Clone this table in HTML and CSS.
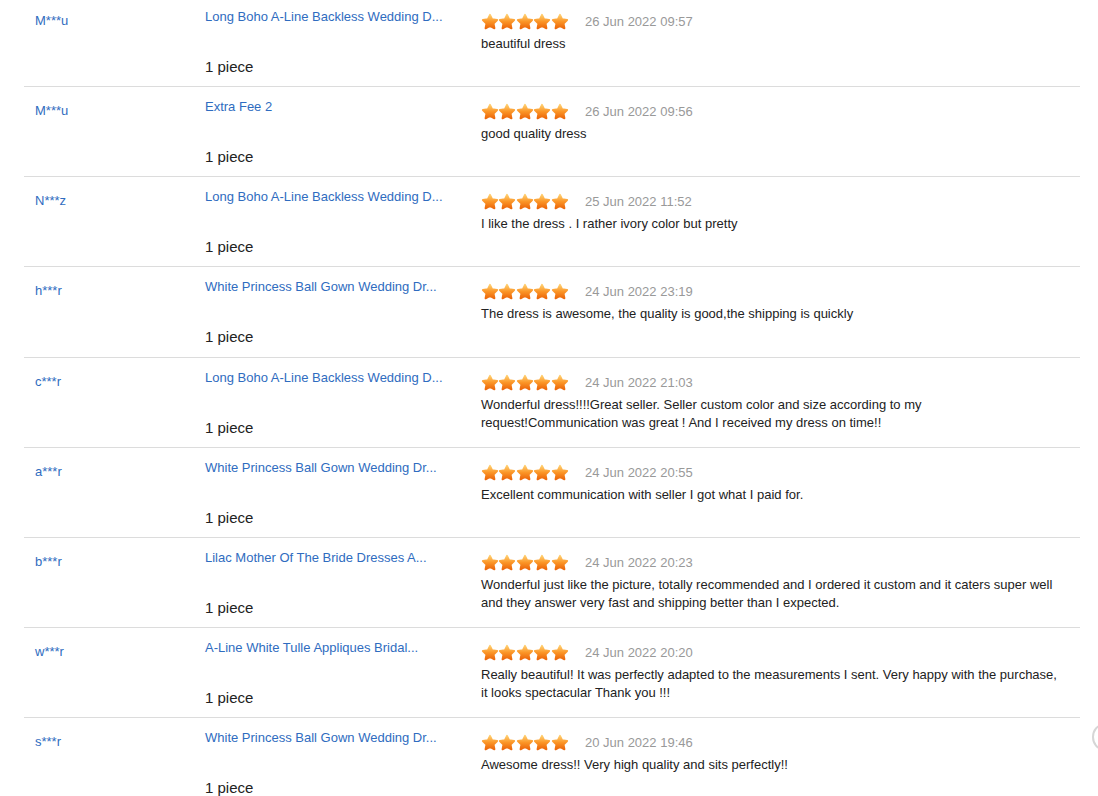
FILE: index.html
```html
<!DOCTYPE html>
<html>
<head>
<meta charset="utf-8">
<link rel="stylesheet" href="styles.css">
</head>
<body>
<svg width="0" height="0" class="defs">
  <defs>
    <linearGradient id="sg" x1="0" y1="0" x2="0" y2="1">
      <stop offset="0" stop-color="#ffcf70"/>
      <stop offset="0.5" stop-color="#fb9527"/>
      <stop offset="1" stop-color="#ec670a"/>
    </linearGradient>
    <symbol id="star" viewBox="0 0 24 24">
      <path d="M12 2.4l2.9 6 6.6.9-4.8 4.6 1.2 6.5L12 17.3l-5.9 3.1 1.2-6.5-4.8-4.6 6.6-.9z" fill="url(#sg)" stroke="url(#sg)" stroke-width="2.6" stroke-linejoin="round"/>
    </symbol>
  </defs>
</svg>
<div class="list">
  <div class="row">
    <div class="name">M***u</div>
    <div class="product"><a class="plink">Long Boho A-Line Backless Wedding D...</a><div class="qty">1 piece</div></div>
    <div class="review">
      <div class="meta"><span class="stars"><svg><use href="#star"/></svg><svg><use href="#star"/></svg><svg><use href="#star"/></svg><svg><use href="#star"/></svg><svg><use href="#star"/></svg></span><span class="date">26 Jun 2022 09:57</span></div>
      <p class="comment">beautiful dress</p>
    </div>
  </div>
  <div class="row">
    <div class="name">M***u</div>
    <div class="product"><a class="plink">Extra Fee 2</a><div class="qty">1 piece</div></div>
    <div class="review">
      <div class="meta"><span class="stars"><svg><use href="#star"/></svg><svg><use href="#star"/></svg><svg><use href="#star"/></svg><svg><use href="#star"/></svg><svg><use href="#star"/></svg></span><span class="date">26 Jun 2022 09:56</span></div>
      <p class="comment">good quality dress</p>
    </div>
  </div>
  <div class="row">
    <div class="name">N***z</div>
    <div class="product"><a class="plink">Long Boho A-Line Backless Wedding D...</a><div class="qty">1 piece</div></div>
    <div class="review">
      <div class="meta"><span class="stars"><svg><use href="#star"/></svg><svg><use href="#star"/></svg><svg><use href="#star"/></svg><svg><use href="#star"/></svg><svg><use href="#star"/></svg></span><span class="date">25 Jun 2022 11:52</span></div>
      <p class="comment">I like the dress . I rather ivory color but pretty</p>
    </div>
  </div>
  <div class="row">
    <div class="name">h***r</div>
    <div class="product"><a class="plink">White Princess Ball Gown Wedding Dr...</a><div class="qty">1 piece</div></div>
    <div class="review">
      <div class="meta"><span class="stars"><svg><use href="#star"/></svg><svg><use href="#star"/></svg><svg><use href="#star"/></svg><svg><use href="#star"/></svg><svg><use href="#star"/></svg></span><span class="date">24 Jun 2022 23:19</span></div>
      <p class="comment">The dress is awesome, the quality is good,the shipping is quickly</p>
    </div>
  </div>
  <div class="row">
    <div class="name">c***r</div>
    <div class="product"><a class="plink">Long Boho A-Line Backless Wedding D...</a><div class="qty">1 piece</div></div>
    <div class="review">
      <div class="meta"><span class="stars"><svg><use href="#star"/></svg><svg><use href="#star"/></svg><svg><use href="#star"/></svg><svg><use href="#star"/></svg><svg><use href="#star"/></svg></span><span class="date">24 Jun 2022 21:03</span></div>
      <p class="comment">Wonderful dress!!!!Great seller. Seller custom color and size according to my request!Communication was great ! And I received my dress on time!!</p>
    </div>
  </div>
  <div class="row">
    <div class="name">a***r</div>
    <div class="product"><a class="plink">White Princess Ball Gown Wedding Dr...</a><div class="qty">1 piece</div></div>
    <div class="review">
      <div class="meta"><span class="stars"><svg><use href="#star"/></svg><svg><use href="#star"/></svg><svg><use href="#star"/></svg><svg><use href="#star"/></svg><svg><use href="#star"/></svg></span><span class="date">24 Jun 2022 20:55</span></div>
      <p class="comment">Excellent communication with seller I got what I paid for.</p>
    </div>
  </div>
  <div class="row">
    <div class="name">b***r</div>
    <div class="product"><a class="plink">Lilac Mother Of The Bride Dresses A...</a><div class="qty">1 piece</div></div>
    <div class="review">
      <div class="meta"><span class="stars"><svg><use href="#star"/></svg><svg><use href="#star"/></svg><svg><use href="#star"/></svg><svg><use href="#star"/></svg><svg><use href="#star"/></svg></span><span class="date">24 Jun 2022 20:23</span></div>
      <p class="comment">Wonderful just like the picture, totally recommended and I ordered it custom and it caters super well and they answer very fast and shipping better than I expected.</p>
    </div>
  </div>
  <div class="row">
    <div class="name">w***r</div>
    <div class="product"><a class="plink">A-Line White Tulle Appliques Bridal...</a><div class="qty">1 piece</div></div>
    <div class="review">
      <div class="meta"><span class="stars"><svg><use href="#star"/></svg><svg><use href="#star"/></svg><svg><use href="#star"/></svg><svg><use href="#star"/></svg><svg><use href="#star"/></svg></span><span class="date">24 Jun 2022 20:20</span></div>
      <p class="comment">Really beautiful! It was perfectly adapted to the measurements I sent. Very happy with the purchase, it looks spectacular Thank you !!!</p>
    </div>
  </div>
  <div class="row">
    <div class="name">s***r</div>
    <div class="product"><a class="plink">White Princess Ball Gown Wedding Dr...</a><div class="qty">1 piece</div></div>
    <div class="review">
      <div class="meta"><span class="stars"><svg><use href="#star"/></svg><svg><use href="#star"/></svg><svg><use href="#star"/></svg><svg><use href="#star"/></svg><svg><use href="#star"/></svg></span><span class="date">20 Jun 2022 19:46</span></div>
      <p class="comment">Awesome dress!! Very high quality and sits perfectly!!</p>
    </div>
  </div>
</div>
<div class="edge-knob"></div>
</body>
</html>
```
FILE: styles.css
```css
html, body {
  margin: 0;
  padding: 0;
  background: #fff;
  overflow: hidden;
}
body {
  font-family: "Liberation Sans", Arial, sans-serif;
  font-size: 13px;
  color: #333;
}
.defs {
  position: absolute;
  width: 0;
  height: 0;
}
.list {
  margin: -3px 0 0 24px;
  width: 1056px;
}
.row {
  display: grid;
  grid-template-columns: 170px 276px 579px;
  padding: 0 0 0 11px;
  height: 89.15px;
  border-bottom: 1px solid #dcdcdc;
  box-sizing: content-box;
}
.name {
  color: #2f6cc0;
  line-height: 16px;
  padding-top: 16px;
}
.product {
  padding-top: 12px;
}
.plink {
  display: block;
  color: #2f6cc0;
  line-height: 16px;
  text-decoration: none;
}
.qty {
  margin-top: 33px;
  font-size: 15px;
  line-height: 18px;
  color: #222;
}
.review {
  padding-top: 16px;
}
.meta {
  display: flex;
  align-items: center;
  height: 18px;
}
.stars {
  display: flex;
  margin-left: -0.5px;
}
.stars svg {
  width: 18px;
  height: 18px;
  margin-right: -0.5px;
  display: block;
}
.date {
  margin-left: 17px;
  color: #999;
  line-height: 18px;
}
.comment {
  margin: 4px 0 0;
  line-height: 18px;
  color: #222;
}
.edge-knob {
  position: fixed;
  right: -16px;
  top: 724px;
  width: 18px;
  height: 22px;
  border-radius: 50%;
  border: 2px solid #d6d6d6;
}
```
